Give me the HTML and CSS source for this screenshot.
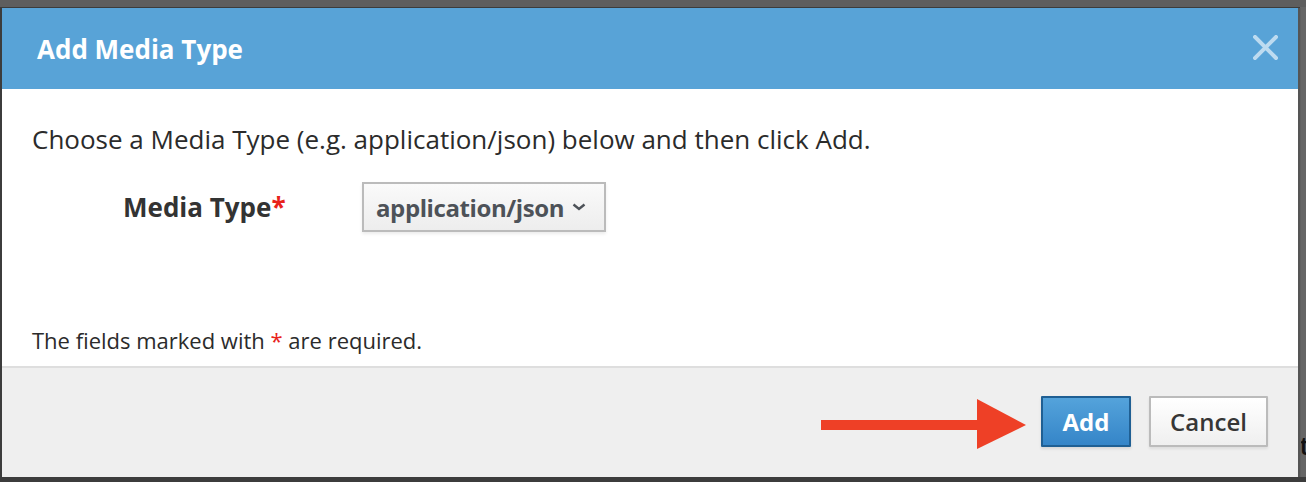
FILE: index.html
```html
<!DOCTYPE html>
<html>
<head>
<meta charset="utf-8">
<link rel="stylesheet" href="styles.css">
</head>
<body>
<div class="page-frag">nt</div>
<div class="modal">
  <div class="modal-header">
    <h1 class="modal-title">Add Media Type</h1>
    <button class="close" aria-label="Close">
      <svg width="25" height="25" viewBox="0 0 25 25"><path d="M2 2 L23 23 M23 2 L2 23" stroke="#bddbf0" stroke-width="4" stroke-linecap="square"/></svg>
    </button>
  </div>
  <div class="modal-body">
    <p class="intro">Choose a Media Type (e.g. application/json) below and then click Add.</p>
    <div class="form-row">
      <label class="form-label">Media Type<span class="req">*</span></label>
      <div class="select">
        <span class="select-value">application/json</span>
        <svg class="chev" width="14" height="8" viewBox="0 0 14 8"><path d="M1.5 1.5 L7 6 L12.5 1.5" fill="none" stroke="#4d5258" stroke-width="2.4"/></svg>
      </div>
    </div>
    <p class="note">The fields marked with <span class="req">*</span> are required.</p>
  </div>
  <div class="modal-footer">
    <svg class="arrow" width="206" height="52" viewBox="0 0 206 52"><rect x="0" y="21" width="160" height="10" fill="#ee4026"/><polygon points="156,0 205,26 156,50" fill="#ee4026"/></svg>
    <button class="btn btn-primary">Add</button>
    <button class="btn btn-default">Cancel</button>
  </div>
</div>
</body>
</html>
```

FILE: styles.css
```css
html, body {
  margin: 0;
  padding: 0;
}
body {
  width: 1306px;
  height: 482px;
  overflow: hidden;
  background: #3c3c3c;
  font-family: "Open Sans", "Liberation Sans", sans-serif;
  position: relative;
  border-top: 7px solid #5e5e5e;
  box-sizing: border-box;
}
body::after {
  content: "";
  position: absolute;
  z-index: -1;
  left: 1300px;
  top: 0;
  width: 6px;
  height: 470px;
  background: #666;
}
.page-frag {
  position: absolute;
  z-index: 0;
  left: 1283px;
  top: 420px;
  font-size: 26px;
  font-weight: 600;
  line-height: 36px;
  color: #111;
}
.modal {
  position: relative;
  z-index: 1;
  margin-left: 2px;
  margin-top: 1px;
  width: 1296px;
  height: 469px;
  background: #fff;
  display: flex;
  flex-direction: column;
  box-shadow: 2px 0 0 #555, 3px 0 0 #606060;
}
.modal-header {
  height: 81px;
  background: #58a3d7;
  display: flex;
  align-items: center;
  justify-content: space-between;
  padding: 0 20px 0 35px;
  box-sizing: border-box;
}
.modal-title {
  margin: 0;
  color: #fff;
  font-size: 26px;
  font-weight: 700;
  line-height: 1;
}
.close {
  border: 0;
  background: none;
  padding: 0;
  width: 25px;
  height: 25px;
  display: block;
  margin-top: -2px;
}
.close svg { display: block; }
.modal-body {
  height: 277px;
  padding: 0 30px;
  box-sizing: border-box;
  color: #333;
  display: flex;
  flex-direction: column;
}
.intro {
  margin: 31px 0 0;
  font-size: 26px;
  line-height: 38px;
  color: #2b2b2b;
}
.form-row {
  display: flex;
  align-items: center;
  margin-top: 24px;
}
.form-label {
  width: 330px;
  padding-left: 91px;
  box-sizing: border-box;
  white-space: nowrap;
  font-size: 26px;
  font-weight: 700;
  color: #333;
}
.req {
  color: #e8231b;
}
.select {
  width: 244px;
  height: 50px;
  box-sizing: border-box;
  border: 2px solid #bbbbbb;
  background: linear-gradient(#fafafa, #ededed);
  box-shadow: 0 2px 3px rgba(0,0,0,0.08);
  display: flex;
  align-items: center;
  padding: 0 18px 0 12px;
  justify-content: space-between;
}
.select-value {
  font-size: 24px;
  font-weight: 700;
  color: #4d5258;
  letter-spacing: -0.4px;
}
.chev { display: block; }
.note {
  margin: auto 0 0;
  padding-bottom: 11px;
  font-size: 22px;
  line-height: 30px;
  color: #2b2b2b;
}
.modal-footer {
  flex: 1;
  border-top: 2px solid #dedede;
  background: #efefef;
  display: flex;
  align-items: center;
  justify-content: flex-end;
  padding: 0 30px 0 0;
  box-sizing: border-box;
  gap: 18px;
}
.arrow {
  display: block;
  margin-right: -4px;
  margin-top: 4px;
}
.btn {
  height: 51px;
  box-sizing: border-box;
  font-family: "Open Sans", "Liberation Sans", sans-serif;
  font-size: 24px;
  font-weight: 600;
  border-radius: 1px;
  padding: 0;
  margin-top: -2px;
}
.btn-primary {
  width: 90px;
  color: #fff;
  font-weight: 700;
  border: 2px solid #1f5f93;
  background: linear-gradient(#54a3db, #3585c8);
  box-shadow: 0 2px 3px rgba(0,0,0,0.1);
}
.btn-default {
  width: 119px;
  color: #363636;
  border: 2px solid #bbbbbb;
  background: linear-gradient(#ffffff, #efefef);
  box-shadow: 0 2px 3px rgba(0,0,0,0.08);
}
```
